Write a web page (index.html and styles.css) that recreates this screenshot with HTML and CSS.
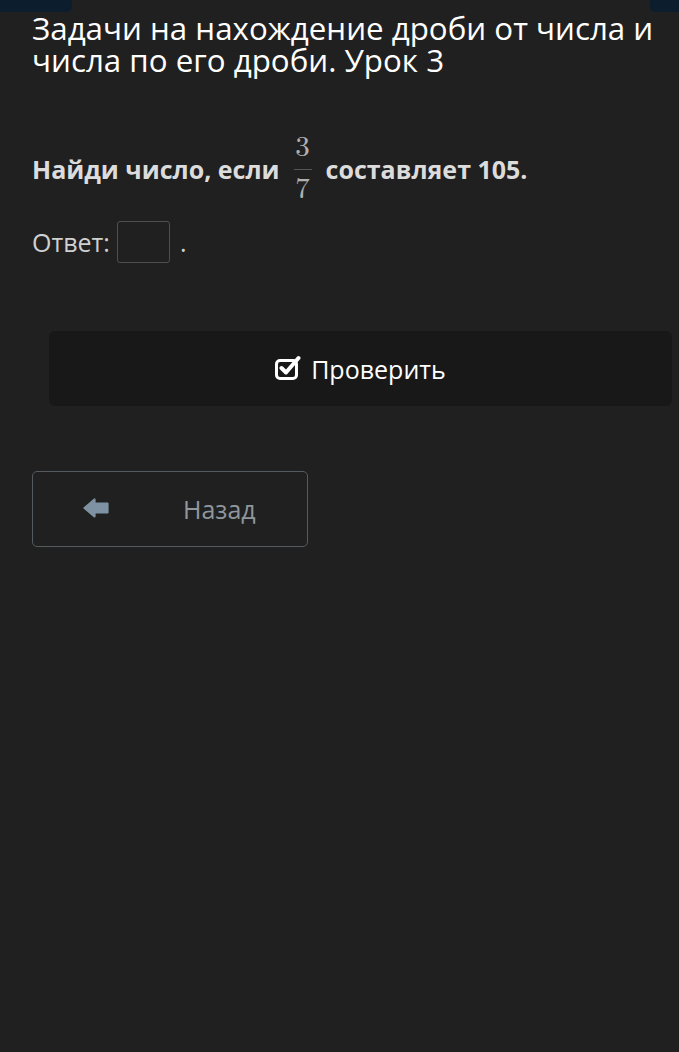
FILE: index.html
```html
<!DOCTYPE html>
<html lang="ru">
<head>
<meta charset="utf-8">
<link rel="stylesheet" href="styles.css">
</head>
<body>
<div class="topbar">
  <span class="tab tab-left"></span>
  <span class="tab tab-right"></span>
</div>
<main class="page">
  <h1 class="title">Задачи на нахождение дроби от числа и числа по его дроби. Урок 3</h1>
  <p class="question">Найди число, если
    <span class="frac"><span class="num">3</span><span class="bar"></span><span class="den">7</span></span>
    составляет 105.</p>
  <div class="answer">
    <span>Ответ:</span>
    <span class="box"></span>
    <span class="dot">.</span>
  </div>
  <div class="check-wrap">
    <button class="check">
      <svg class="check-icon" viewBox="0 0 26 26" width="26" height="26">
        <rect x="1.5" y="6.5" width="20" height="18" rx="3.5" fill="none" stroke="#fff" stroke-width="3"/>
        <path d="M6.5 14 L11 18.5 L23.5 4" fill="none" stroke="#fff" stroke-width="4" stroke-linecap="round" stroke-linejoin="round"/>
      </svg>
      <span>Проверить</span>
    </button>
  </div>
  <button class="back">
    <svg class="back-icon" viewBox="0 0 26 20" width="26" height="20">
      <path d="M1.5 10 L11.5 1.5 L11.5 5.5 L24.5 5.5 L24.5 14.5 L11.5 14.5 L11.5 18.5 Z" fill="#7f92a3" stroke="#7f92a3" stroke-width="2.2" stroke-linejoin="round"/>
    </svg>
    <span class="back-label">Назад</span>
  </button>
</main>
</body>
</html>
```
FILE: styles.css
```css
html, body {
  margin: 0;
  padding: 0;
  background: #202020;
  height: 100%;
}
body {
  font-family: "Open Sans", "Noto Sans", sans-serif;
  color: #fff;
}
.topbar {
  display: flex;
  justify-content: space-between;
  height: 12px;
}
.tab {
  display: block;
  height: 12px;
  background: #0c1e2d;
}
.tab-left {
  width: 72px;
  border-bottom-right-radius: 5px;
}
.tab-right {
  width: 29px;
  border-bottom-left-radius: 5px;
}
.page {
  padding: 0 32px;
}
.title {
  margin: 0 -16px 0 0;
  font-weight: 400;
  font-size: 31.3px;
  line-height: 32px;
  color: #fff;
}
.question {
  margin: 53px 0 0;
  font-weight: 700;
  font-size: 25px;
  color: #dcdcdc;
  display: flex;
  align-items: center;
  gap: 12px;
  height: 80px;
  white-space: nowrap;
}
.frac {
  display: inline-flex;
  flex-direction: column;
  align-items: center;
  font-family: "Latin Modern Math", "DejaVu Serif", "Liberation Serif", serif;
  font-weight: 400;
  color: #b0b0b0;
  font-size: 29px;
  line-height: 30px;
  width: 22px;
}
.frac .bar {
  display: block;
  width: 18px;
  height: 1px;
  background: #555;
  margin: 6px 0 5px;
}
.answer {
  display: flex;
  align-items: center;
  gap: 7px;
  font-size: 25px;
  color: #d0d0d0;
  margin-top: 12px;
  height: 42px;
}
.box {
  display: inline-block;
  width: 53px;
  height: 42px;
  border: 1px solid #4f4f4f;
  border-radius: 3px;
  box-sizing: border-box;
}
.dot {
  margin-left: 3px;
}
.check-wrap {
  padding: 68px 0 0 17px;
  margin-right: -25px;
}
.check {
  width: 100%;
  height: 75px;
  background: #181818;
  border: none;
  border-radius: 6px;
  display: flex;
  align-items: center;
  justify-content: center;
  gap: 10px;
  color: #fff;
  font-family: "Open Sans", "Noto Sans", sans-serif;
  font-size: 25px;
  padding: 0;
}
.check-icon {
  margin-top: -4px;
}
.back {
  margin-top: 65px;
  width: 276px;
  height: 76px;
  background: transparent;
  border: 1px solid #555a5e;
  border-radius: 5px;
  display: flex;
  align-items: center;
  padding: 0 0 0 50px;
  color: #8f969c;
  font-family: "Open Sans", "Noto Sans", sans-serif;
  font-size: 25px;
}
.back-icon {
  margin-top: -2px;
}
.back-label {
  margin-left: 74px;
}
```
